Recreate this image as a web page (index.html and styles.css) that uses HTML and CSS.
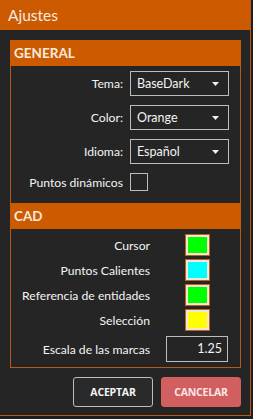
FILE: index.html
```html
<!DOCTYPE html>
<html lang="es">
<head>
    <meta charset="UTF-8">
    <title>Ajustes</title>
    <link rel="stylesheet" href="styles.css">
</head>
<body>
    <div class="window">
        <div class="title-bar">Ajustes</div>

        <div class="group">
            <div class="group-header">GENERAL</div>
            <div class="general">
                <label class="row-label">Tema:</label>
                <div class="combo">
                    <span>BaseDark</span>
                    <svg class="arrow" width="7" height="4" viewBox="0 0 7 4"><polygon points="0,0 7,0 3.5,4" fill="#f0f0f0"/></svg>
                </div>

                <label class="row-label">Color:</label>
                <div class="combo">
                    <span>Orange</span>
                    <svg class="arrow" width="7" height="4" viewBox="0 0 7 4"><polygon points="0,0 7,0 3.5,4" fill="#f0f0f0"/></svg>
                </div>

                <label class="row-label">Idioma:</label>
                <div class="combo">
                    <span>Español</span>
                    <svg class="arrow" width="7" height="4" viewBox="0 0 7 4"><polygon points="0,0 7,0 3.5,4" fill="#f0f0f0"/></svg>
                </div>

                <label class="row-label">Puntos dinámicos</label>
                <div class="check-cell"><span class="checkbox"></span></div>
            </div>

            <div class="group-header">CAD</div>
            <div class="cad">
                <label class="row-label">Cursor</label>
                <div class="swatch-cell"><span class="swatch"><span class="fill green"></span></span></div>

                <label class="row-label">Puntos Calientes</label>
                <div class="swatch-cell"><span class="swatch"><span class="fill cyan"></span></span></div>

                <label class="row-label">Referencia de entidades</label>
                <div class="swatch-cell"><span class="swatch"><span class="fill green"></span></span></div>

                <label class="row-label">Selección</label>
                <div class="swatch-cell"><span class="swatch"><span class="fill yellow"></span></span></div>

                <label class="row-label scale-label">Escala de las marcas</label>
                <div class="textbox">1.25</div>
            </div>
        </div>

        <div class="buttons">
            <button type="button" class="btn btn-ok">ACEPTAR</button>
            <button type="button" class="btn btn-cancel">CANCELAR</button>
        </div>
    </div>
</body>
</html>
```

FILE: styles.css
```css
body {
    margin: 0;
    background-color: #1e1e1e;
    font-family: 'Lato', 'Open Sans', sans-serif;
    color: #f4f4f4;
}
.window {
    width: 250px;
    height: 415px;
    background-color: #252525;
    border-right: 1px solid #b8581a;
    border-bottom: 1px solid #b8581a;
}
.title-bar {
    height: 30px;
    line-height: 30px;
    padding-left: 8px;
    background-color: #cc5a00;
    color: #f6ebe2;
    font-size: 15.5px;
}
.group {
    margin: 10px 9px 0 10px;
    border: 1px solid #b8581a;
    border-top: none;
}
.group-header {
    height: 26px;
    line-height: 26px;
    padding-left: 4px;
    margin: 0 -1px;
    background-color: #cc5a00;
    color: #f8eadc;
    font-size: 13.5px;
    font-weight: bold;
}
.general {
    display: grid;
    grid-template-columns: 112px 99px;
    column-gap: 7px;
    row-gap: 9px;
    padding: 5px 0 12px 0;
    align-items: center;
}
.row-label {
    text-align: right;
    font-size: 12.2px;
    white-space: nowrap;
}
.combo {
    height: 23px;
    border: 1px solid #bdbdbd;
    display: flex;
    align-items: center;
    justify-content: space-between;
    padding: 0 9px 0 6px;
    font-size: 12.5px;
}
.arrow {
    display: block;
}
.checkbox {
    display: block;
    width: 16px;
    height: 16px;
    border: 1px solid #bdbdbd;
}
.cad {
    display: grid;
    grid-template-columns: 139px 62px;
    column-gap: 16px;
    row-gap: 3px;
    padding: 5px 0 5px 0;
    align-items: center;
}
.swatch-cell {
    display: flex;
    justify-content: center;
}
.swatch {
    display: block;
    width: 25px;
    height: 22px;
    box-sizing: border-box;
    border: 1px solid #c0601e;
    background-color: #f4e6d4;
    padding: 2px;
}
.fill {
    display: block;
    width: 100%;
    height: 100%;
}
.green { background-color: #00ff00; }
.cyan { background-color: #00ffff; }
.yellow { background-color: #ffff00; }
.scale-label {
    margin-top: 2px;
}
.textbox {
    margin-top: 2px;
    height: 24px;
    line-height: 24px;
    border: 1px solid #bdbdbd;
    text-align: right;
    padding-right: 5px;
    font-size: 12.5px;
}
.buttons {
    display: flex;
    justify-content: flex-end;
    gap: 8px;
    margin: 9px 9px 0 0;
}
.btn {
    width: 80px;
    height: 30px;
    border-radius: 3px;
    font-family: 'Open Sans', 'Lato', sans-serif;
    font-size: 10.5px;
    font-weight: bold;
    letter-spacing: -0.2px;
    cursor: pointer;
}
.btn-ok {
    background-color: #2a2a2a;
    border: 1px solid #bdbdbd;
    color: #f4f4f4;
}
.btn-cancel {
    background-color: #d25f5f;
    border: 1px solid #d25f5f;
    color: #fbe6e6;
}
```
